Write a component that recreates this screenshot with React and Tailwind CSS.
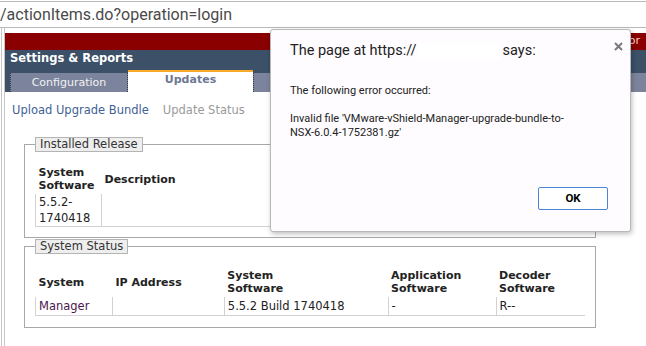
import React from "react";

const statusRows = [
  { system: "Manager", ip: "", software: "5.5.2 Build 1740418", app: "-", decoder: "R--" },
];

const Dialog = () => (
  <div className="absolute left-[270px] top-[29px] w-[361px] h-[203px] rounded-[3px] border border-[#b8b8b8] bg-[#fefcfe] shadow-[1px_2px_5px_rgba(0,0,0,0.25)] font-['Roboto',sans-serif] text-[#222]">
    <div className="pl-[19px] pt-[12px] text-[14.5px] leading-[18px] flex items-center">
      <span>The page at https://</span>
      <span className="inline-block w-[82px] h-[16px] bg-white"></span>
      <span className="ml-[4px]">says:</span>
    </div>
    <svg className="absolute left-[343px] top-[12px]" width="9" height="9" viewBox="0 0 9 9">
      <path d="M1 1 L8 8 M8 1 L1 8" stroke="#7a7a7a" strokeWidth="2" />
    </svg>
    <div className="pl-[19px] pt-[24px] text-[11px] leading-[14px]">
      <p>The following error occurred:</p>
      <p className="mt-[14px]">
        Invalid file 'VMware-vShield-Manager-upgrade-bundle-to-
        <br />
        NSX-6.0.4-1752381.gz'
      </p>
    </div>
    <div className="flex justify-end pr-[22px] mt-[47px]">
      <button className="w-[70px] h-[23px] border border-[#4a86d8] bg-white rounded-[2px] text-[11.5px] font-bold text-black">
        OK
      </button>
    </div>
  </div>
);

const App = () => {
  return (
    <div className="relative w-[646px] h-[346px] overflow-hidden bg-white font-['DejaVu_Sans',sans-serif]">
      {/* address bar */}
      <div className="mt-[1px] h-[27px] border-y border-[#b9b9b9] flex items-center font-['Roboto',sans-serif] text-[16px] text-[#4a4a4a]">
        /actionItems.do?operation=login
      </div>

      <div className="flex h-[318px]">
        <div className="ml-[1px] w-[4px] border-x border-[#c6c6c6]"></div>

        <div className="flex-1 pt-[5px]">
          {/* header */}
          <div className="h-[17px] bg-[#8a0000] flex justify-end items-center pr-[6px] text-[11px] text-[#f3d3cf]">
            Administrator
          </div>
          <div className="bg-[#3c5068]">
            <div className="h-[20px] pl-[5px] text-[11.5px] leading-[17px] font-bold text-white">
              Settings &amp; Reports
            </div>
            <div className="flex items-end h-[22px]">
              <div className="w-[5px]"></div>
              <div className="w-[118px] h-[19px] bg-[#7b849c] border-x border-dotted border-[#3a3a3a] text-center text-[11px] leading-[19px] text-[#f2f2f2]">
                Configuration
              </div>
              <div className="w-[125px] h-[22px] bg-white border-t-2 border-[#f7a928] text-center text-[11px] leading-[16px] font-bold text-[#6e7894]">
                Updates
              </div>
              <div className="flex-1 h-[19px] bg-[#7b849c] border-l border-dotted border-[#3a3a3a]"></div>
            </div>
          </div>

          {/* content */}
          <div className="pt-[10px] text-[11.5px]">
            <div className="pl-[7px] leading-[16px] flex">
              <span className="text-[#3f5f96]">Upload Upgrade Bundle</span>
              <span className="ml-[14px] text-[#9a9a9a]">Update Status</span>
            </div>

            <fieldset className="ml-[19px] mt-[19px] w-[572px] border border-[#a8a8a8] px-[10px] pb-[10px] pt-[12px]">
              <legend className="border border-[#b4b4b4] bg-[#eeeeee] px-[4px] leading-[13px] text-[#333]">
                Installed Release
              </legend>
              <table className="border-collapse w-full text-[#222]">
                <thead>
                  <tr className="text-[11px]">
                    <th className="w-[66px] text-left align-middle px-[3px] py-[2px] leading-[13px] font-bold">System Software</th>
                    <th className="text-left align-middle px-[3px] py-[2px] leading-[13px] font-bold">Description</th>
                  </tr>
                </thead>
                <tbody>
                  <tr>
                    <td className="border-l border-b border-[#d2d2d2] px-[3px] leading-[16px] align-top">5.5.2-<br />1740418</td>
                    <td className="border-l border-b border-[#d2d2d2] px-[3px] leading-[16px] align-top"></td>
                  </tr>
                </tbody>
              </table>
            </fieldset>

            <fieldset className="ml-[19px] mt-[1px] w-[572px] border border-[#a8a8a8] px-[10px] pb-[11px] pt-[13px]">
              <legend className="border border-[#b4b4b4] bg-[#eeeeee] px-[4px] leading-[13px] text-[#333]">
                System Status
              </legend>
              <table className="border-collapse w-[550px] text-[#222]">
                <thead>
                  <tr className="text-[11px]">
                    <th className="w-[77px] text-left align-middle px-[3px] py-[2px] leading-[13px] font-bold">System</th>
                    <th className="w-[112px] text-left align-middle px-[3px] py-[2px] leading-[13px] font-bold">IP Address</th>
                    <th className="w-[164px] text-left align-middle px-[3px] py-[2px] leading-[13px] font-bold">System<br />Software</th>
                    <th className="w-[108px] text-left align-middle px-[3px] py-[2px] leading-[13px] font-bold">Application<br />Software</th>
                    <th className="w-[89px] text-left align-middle px-[3px] py-[2px] leading-[13px] font-bold">Decoder<br />Software</th>
                  </tr>
                </thead>
                <tbody>
                  {statusRows.map((row) => (
                    <tr key={row.system}>
                      <td className="border-l border-b border-[#d2d2d2] px-[3px] py-[1px] leading-[16px] text-[#4b1650]">{row.system}</td>
                      <td className="border-l border-b border-[#d2d2d2] px-[3px] py-[1px] leading-[16px]">{row.ip}</td>
                      <td className="border-l border-b border-[#d2d2d2] px-[3px] py-[1px] leading-[16px]">{row.software}</td>
                      <td className="border-l border-b border-[#d2d2d2] px-[3px] py-[1px] leading-[16px]">{row.app}</td>
                      <td className="border-l border-b border-[#d2d2d2] px-[3px] py-[1px] leading-[16px]">{row.decoder}</td>
                    </tr>
                  ))}
                </tbody>
              </table>
            </fieldset>
          </div>
        </div>
      </div>

      <Dialog />
    </div>
  );
};

export default App;
